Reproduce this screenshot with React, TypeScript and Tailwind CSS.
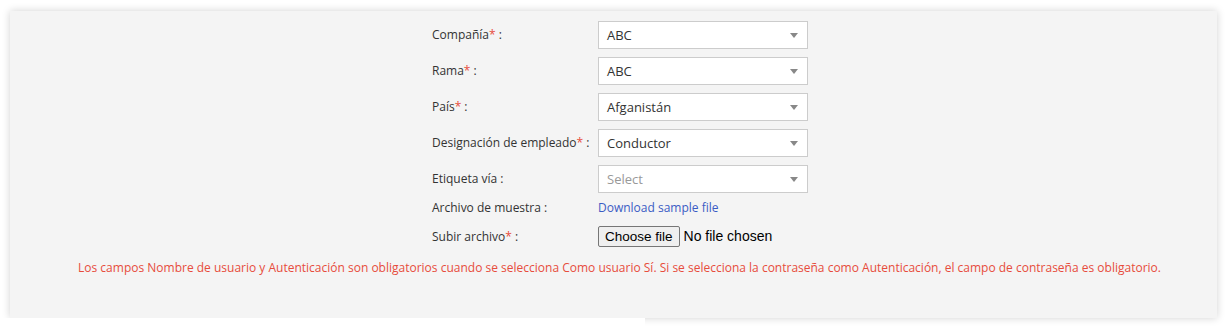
function Req() {
  return <span className="text-[#e74c3c]">*</span>;
}

function SelectBox({ value, placeholder }: { value?: string; placeholder?: boolean }) {
  return (
    <div className="flex h-[28px] w-[210px] items-center justify-between border border-[#cccccc] bg-white pl-[8px] pr-[9px] text-[13px]">
      <span className={placeholder ? "pt-[2px] text-[#999999]" : "pt-[2px] text-[#333333]"}>{value}</span>
      <span className="h-0 w-0 border-x-[4px] border-t-[5px] border-x-transparent border-t-[#888888]" />
    </div>
  );
}

const rows: { label: string; req: boolean; value: string; placeholder?: boolean }[] = [
  { label: "Compañía", req: true, value: "ABC" },
  { label: "Rama", req: true, value: "ABC" },
  { label: "País", req: true, value: "Afganistán" },
  { label: "Designación de empleado", req: true, value: "Conductor" },
  { label: "Etiqueta vía", req: false, value: "Select", placeholder: true },
];

export default function App() {
  return (
    <div className="min-h-[329px] bg-white pl-[10px] pt-[11px] font-['Open_Sans',sans-serif] text-[12px] text-[#333333]">
      <div className="relative h-[307px] w-[1207px] bg-[#f4f4f4] pt-[10px] shadow-[0_0_8px_rgba(0,0,0,0.18)]">
        {/* form grid */}
        <div className="ml-[422px] grid w-[376px] grid-cols-[166px_210px] gap-y-[8px]">
          {rows.map((r) => (
            <div key={r.label} className="contents">
              <div className="flex items-center whitespace-pre">
                <span>{r.label}</span>
                {r.req && <Req />}
                <span> :</span>
              </div>
              <SelectBox value={r.value} placeholder={r.placeholder} />
            </div>
          ))}
          <div className="-mt-[1px] flex h-[16px] items-center whitespace-pre">
            Archivo de muestra :
          </div>
          <div className="-mt-[1px] flex h-[16px] items-center">
            <a href="#" className="text-[#3b5cc4]">
              Download sample file
            </a>
          </div>
          <div className="mt-[2px] flex items-center whitespace-pre">
            Subir archivo<Req />
            <span> :</span>
          </div>
          <div className="mt-[2px] flex items-center font-['Liberation_Sans',sans-serif] text-[14px] text-black">
            <button className="h-[21px] rounded-[2px] border border-[#767676] bg-[#efefef] px-[6px] text-[13.5px] leading-[19px]">
              Choose file
            </button>
            <span className="ml-[4px]">No file chosen</span>
          </div>
        </div>
        <p className="mt-[12px] pl-[12px] text-center text-[12px] text-[#e74c3c]">
          Los campos Nombre de usuario y Autenticación son obligatorios cuando se selecciona Como usuario Sí. Si se selecciona la contraseña como Autenticación, el campo de contraseña es obligatorio.
        </p>
      </div>
      {/* white strip that hides the shadow under the left half */}
      <div className="relative -ml-[10px] h-[11px] w-[645px] bg-white" />
    </div>
  );
}
